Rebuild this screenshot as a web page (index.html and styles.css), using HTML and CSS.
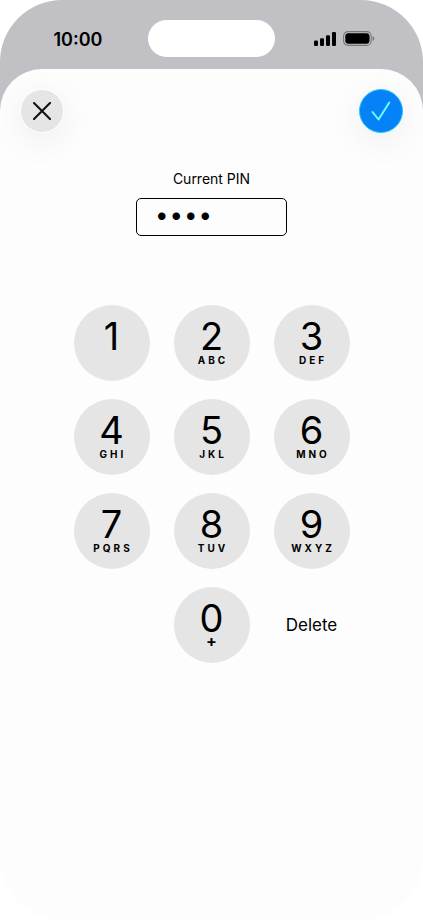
FILE: index.html
```html
<!DOCTYPE html>
<html lang="en">
<head>
<meta charset="utf-8">
<meta name="viewport" content="width=device-width, initial-scale=1">
<title>Current PIN</title>
<link rel="stylesheet" href="styles.css">
</head>
<body>
<div class="phone">
  <header class="status">
    <time class="clock">10:00</time>
    <div class="island"></div>
    <div class="indicators">
      <svg width="22" height="14" viewBox="0 0 22 14" aria-hidden="true">
        <rect x="0" y="8.5" width="4" height="5.5" rx="1.2"/>
        <rect x="6" y="6.2" width="4" height="7.8" rx="1.2"/>
        <rect x="12" y="3.2" width="4" height="10.8" rx="1.2"/>
        <rect x="18" y="0" width="4" height="14" rx="1.2"/>
      </svg>
      <svg width="32" height="15" viewBox="0 0 32 15" aria-hidden="true">
        <rect x="0.6" y="0.6" width="27.6" height="13.8" rx="4.5" fill="none" stroke="#77767a" stroke-width="1.1"/>
        <rect x="2.3" y="2.3" width="24.2" height="10.4" rx="3"/>
        <path d="M29.7 5v5c1-.4 1.7-1.4 1.7-2.5S30.700 5.400 29.700 5z" fill="#77767a"/>
      </svg>
    </div>
  </header>
  <main class="sheet">
    <nav class="toolbar">
      <button class="round close" type="button" aria-label="Close">
        <svg width="18" height="18" viewBox="0 0 18 18" aria-hidden="true"><path d="M1 1l16 16M17 1L1 17" fill="none" stroke="#111" stroke-width="2.1" stroke-linecap="round"/></svg>
      </button>
      <button class="round confirm" type="button" aria-label="Confirm">
        <svg width="20" height="20" viewBox="0 0 20 20" aria-hidden="true"><path d="M1.500 11l6 7.500L18.300 1.500" fill="none" stroke="#6cfbff" stroke-width="2" stroke-linecap="round" stroke-linejoin="round"/></svg>
      </button>
    </nav>
    <div class="field">
      <label for="pin">Current PIN</label>
      <input id="pin" type="password" value="1234" inputmode="none">
    </div>
    <div class="keypad">
      <button class="key" type="button"><span class="digit">1</span></button>
      <button class="key" type="button"><span class="digit">2</span><span class="letters">ABC</span></button>
      <button class="key" type="button"><span class="digit">3</span><span class="letters">DEF</span></button>
      <button class="key" type="button"><span class="digit">4</span><span class="letters">GHI</span></button>
      <button class="key" type="button"><span class="digit">5</span><span class="letters">JKL</span></button>
      <button class="key" type="button"><span class="digit">6</span><span class="letters">MNO</span></button>
      <button class="key" type="button"><span class="digit">7</span><span class="letters">PQRS</span></button>
      <button class="key" type="button"><span class="digit">8</span><span class="letters">TUV</span></button>
      <button class="key" type="button"><span class="digit">9</span><span class="letters">WXYZ</span></button>
      <button class="key zero" type="button"><span class="digit">0</span><span class="plus">+</span></button>
      <button class="delete" type="button">Delete</button>
    </div>
  </main>
</div>
</body>
</html>
```
FILE: styles.css
```css
* { box-sizing: border-box; }

body {
  margin: 0;
  background: #fff;
  color: #000;
  font-family: Inter, "Liberation Sans", sans-serif;
}

button {
  padding: 0;
  border: 0;
  background: none;
  color: inherit;
  font: inherit;
}

svg { display: block; }

.phone {
  display: flex;
  flex-direction: column;
  min-height: 100vh;
  overflow: hidden;
  border-radius: 62px;
  background: linear-gradient(#c1c0c5 160px, #fdfdfd 160px);
}

.status {
  display: grid;
  grid-template-columns: 1fr 127px 1fr;
  align-items: center;
  padding: 20px 0 12px;
}

.clock {
  padding: 2px 0 0 8px;
  text-align: center;
  font-size: 18px;
  font-weight: 600;
}

.island {
  height: 37px;
  border-radius: 19px;
  background: #fff;
}

.indicators {
  display: flex;
  align-items: center;
  justify-content: center;
  gap: 7px;
  padding-right: 10px;
}

.sheet {
  flex: 1;
  border-radius: 42px 42px 0 0;
  background: #fdfdfd;
}

.toolbar {
  display: flex;
  justify-content: space-between;
  padding: 20px 20px 0;
}

.round {
  display: grid;
  place-items: center;
  width: 44px;
  height: 44px;
  border-radius: 50%;
}

.close {
  border: 1px solid #fff;
  background: #e5e5e5;
  box-shadow: 0 8px 36px rgba(0, 0, 0, 0.07);
}

.confirm {
  border: 1px solid #26c4ff;
  background: #0583f6;
  box-shadow: 0 8px 36px rgba(0, 0, 0, 0.07);
}

.field {
  display: flex;
  flex-direction: column;
  align-items: center;
  gap: 9px;
  padding-top: 36px;
}

.field label {
  font-size: 14px;
  line-height: 20px;
}

.field input {
  width: 151px;
  height: 38px;
  padding: 0 18px 6px;
  border: 1px solid #000;
  border-radius: 5px;
  background: #fdfdfd;
  color: #000;
  font-family: Inter, "Liberation Sans", sans-serif;
  font-size: 24px;
  letter-spacing: 1px;
}

.keypad {
  display: grid;
  grid-template-columns: repeat(3, 76px);
  justify-content: center;
  gap: 18px 24px;
  padding: 69px 0 40px;
}

.key {
  display: flex;
  flex-direction: column;
  align-items: center;
  height: 76px;
  padding-top: 12px;
  border-radius: 50%;
  background: #e5e5e5;
}

.digit {
  font-size: 38px;
  font-weight: 400;
  line-height: 38px;
}

.letters {
  padding-left: 3px;
  font-size: 10px;
  font-weight: 700;
  line-height: 10px;
  letter-spacing: 3px;
}

.plus {
  font-size: 16px;
  font-weight: 700;
  line-height: 8px;
}

.zero { grid-column: 2; }

.delete {
  font-size: 17px;
}
```
